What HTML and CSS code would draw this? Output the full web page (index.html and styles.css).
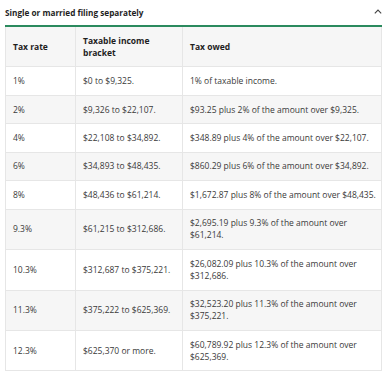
FILE: index.html
```html
<!DOCTYPE html>
<html>
<head>
<meta charset="utf-8">
<link rel="stylesheet" href="styles.css">
</head>
<body>
<div class="wrap">
  <div class="head">
    <span class="title">Single or married filing separately</span>
    <svg class="caret" width="8" height="5" viewBox="0 0 8 5"><path d="M0.8 4.3 L4 1.1 L7.2 4.3" fill="none" stroke="#444" stroke-width="1.1"/></svg>
  </div>
  <div class="tax">
    <div class="row hrow"><div class="cell">Tax rate</div><div class="cell">Taxable income bracket</div><div class="cell">Tax owed</div></div>
    <div class="row"><div class="cell">1%</div><div class="cell">$0 to $9,325.</div><div class="cell">1% of taxable income.</div></div>
    <div class="row alt"><div class="cell">2%</div><div class="cell">$9,326 to $22,107.</div><div class="cell">$93.25 plus 2% of the amount over $9,325.</div></div>
    <div class="row"><div class="cell">4%</div><div class="cell">$22,108 to $34,892.</div><div class="cell">$348.89 plus 4% of the amount over $22,107.</div></div>
    <div class="row alt"><div class="cell">6%</div><div class="cell">$34,893 to $48,435.</div><div class="cell">$860.29 plus 6% of the amount over $34,892.</div></div>
    <div class="row"><div class="cell">8%</div><div class="cell">$48,436 to $61,214.</div><div class="cell">$1,672.87 plus 8% of the amount over $48,435.</div></div>
    <div class="row alt"><div class="cell">9.3%</div><div class="cell">$61,215 to $312,686.</div><div class="cell">$2,695.19 plus 9.3% of the amount over $61,214.</div></div>
    <div class="row"><div class="cell">10.3%</div><div class="cell">$312,687 to $375,221.</div><div class="cell">$26,082.09 plus 10.3% of the amount over $312,686.</div></div>
    <div class="row alt"><div class="cell">11.3%</div><div class="cell">$375,222 to $625,369.</div><div class="cell">$32,523.20 plus 11.3% of the amount over $375,221.</div></div>
    <div class="row"><div class="cell">12.3%</div><div class="cell">$625,370 or more.</div><div class="cell">$60,789.92 plus 12.3% of the amount over $625,369.</div></div>
  </div>
</div>
</body>
</html>
```
FILE: styles.css
```css
html, body { margin: 0; padding: 0; background: #fff; }
body { font-family: "Open Sans", "Liberation Sans", sans-serif; color: #3a3a3a; }
.wrap { padding: 0 2px 0 5px; }
.head {
  display: flex; justify-content: space-between; align-items: center;
  height: 25px;
}
.title { font-weight: 700; font-size: 8.2px; color: #1e1e1e; }
.caret { margin-top: -2px; }
.tax {
  width: 377px;
  border-top: 2px solid #2b8a5e;
  font-size: 8.5px;
  line-height: 12px;
}
.row {
  display: grid;
  grid-template-columns: 70px 107px 200px;
  border-bottom: 1px solid #e6e6e6;
}
.row.alt, .hrow { background: #f6f6f6; }
.hrow { font-weight: 700; color: #1e1e1e; }
.cell {
  display: flex; align-items: center;
  padding: 7.72px 4px 7.72px 7px;
  border-left: 1px solid #e6e6e6;
}
.cell:last-child { border-right: 1px solid #e6e6e6; }
```
